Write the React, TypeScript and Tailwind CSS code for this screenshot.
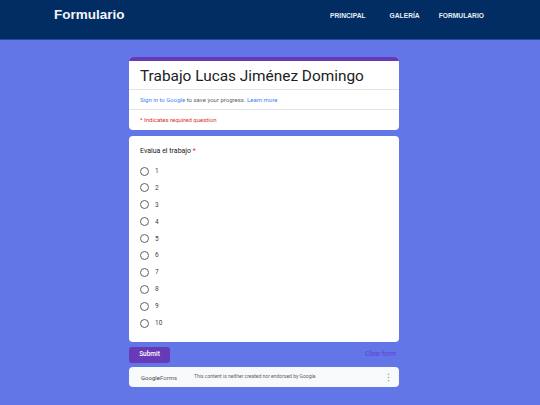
import React from "react";

const nums = ["1", "2", "3", "4", "5", "6", "7", "8", "9", "10"];

export default function App() {
  return (
    <div className="min-h-[405px] w-[540px] bg-[#6276e8] font-['Roboto',sans-serif]">
      <header className="flex h-[40px] items-start justify-between border-b border-[#1b4fa0] bg-[#022d62] pl-[54px] pr-[56px] font-['Liberation_Sans',Arial,sans-serif]">
        <div className="pt-[5px] text-[13.5px] font-bold leading-[20px] text-[#f1f5fb]">Formulario</div>
        <nav className="flex pt-[11px] text-[6.7px] font-bold leading-[10px] text-[#e8eef8]">
          <span>PRINCIPAL</span>
          <span className="ml-[24px]">GALERÍA</span>
          <span className="ml-[19px]">FORMULARIO</span>
        </nav>
      </header>

      <main className="ml-[129px] w-[270px] pt-[17px]">
        <section className="overflow-hidden rounded-[4px] bg-white">
          <div className="h-[4px] bg-[#673ab7]" />
          <div className="border-b border-[#e3e3e3] px-[11px] pb-[3px] pt-[6px]">
            <h1 className="text-[15.4px] leading-[19px] text-[#202124]">Trabajo Lucas Jiménez Domingo</h1>
          </div>
          <div className="border-b border-[#e3e3e3] px-[11px] pb-[5px] pt-[6px] text-[6px] leading-[8px] text-[#5f6368]">
            <span className="text-[#4285f4]">Sign in to Google</span> to save your progress.{" "}
            <span className="text-[#4285f4]">Learn more</span>
          </div>
          <div className="px-[11px] pb-[6px] pt-[6px] text-[6px] leading-[8px] text-[#d93025]">* Indicates required question</div>
        </section>

        <section className="mt-[6px] rounded-[4px] bg-white px-[11px] pb-[14px] pt-[11px]">
          <div className="text-[7px] leading-[9px] text-[#202124]">
            Evalua el trabajo <span className="text-[#d93025]">*</span>
          </div>
          <div className="mt-[10px] flex flex-col gap-[6.9px]">
            {nums.map((n) => (
              <div key={n} className="flex h-[10px] items-center gap-[6px]">
                <span className="h-[9px] w-[9px] rounded-full border-[1.3px] border-[#5f6368]" />
                <span className="text-[6.5px] leading-[8px] text-[#3c4043]">{n}</span>
              </div>
            ))}
          </div>
        </section>

        <div className="mt-[5px] flex items-center justify-between">
          <button className="h-[16px] w-[41px] rounded-[3px] bg-[#673ab7] text-[6.5px] font-medium text-white">Submit</button>
          <span className="pr-[3px] text-[6.5px] font-medium text-[#6547d4]">Clear form</span>
        </div>

        <footer className="mt-[4px] flex h-[20px] items-center rounded-[4px] bg-[#f8f9fb] pl-[12px] pr-[9px] text-[5.5px] text-[#5f6368]">
          <span className="w-[53px] text-[6px] text-[#444]">
            Google<span className="text-[#5f6368]">Forms</span>
          </span>
          <span className="flex-1 text-[5px]">This content is neither created nor endorsed by Google.</span>
          <svg width="3" height="9" viewBox="0 0 3 9" className="text-[#9aa0a6]">
            <circle cx="1.5" cy="1.2" r="0.8" fill="currentColor" />
            <circle cx="1.5" cy="4.5" r="0.8" fill="currentColor" />
            <circle cx="1.5" cy="7.8" r="0.8" fill="currentColor" />
          </svg>
        </footer>
      </main>
    </div>
  );
}
